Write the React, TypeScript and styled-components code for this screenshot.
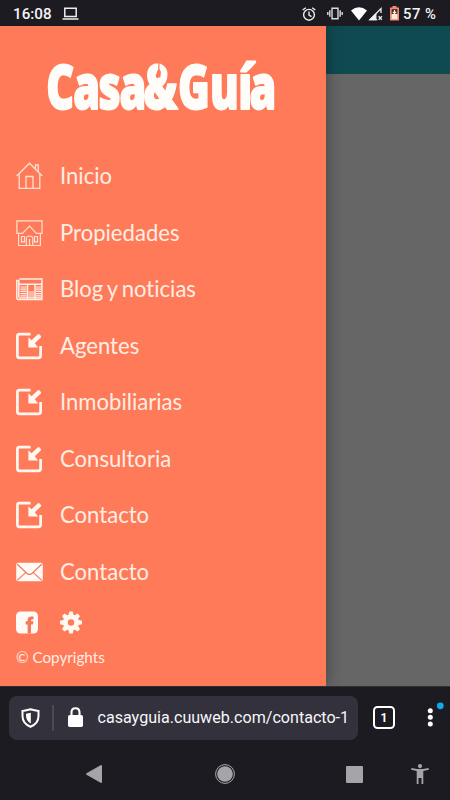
import React from "react";
import styled, { createGlobalStyle } from "styled-components";

const GlobalStyle = createGlobalStyle`
  * { box-sizing: border-box; }
  body { margin: 0; background: #1c1b22; }
`;

const Screen = styled.div`
  width: 450px;
  height: 800px;
  display: flex;
  flex-direction: column;
  overflow: hidden;
  background: #1c1b22;
`;

const StatusBar = styled.header`
  height: 26px;
  flex: none;
  display: flex;
  align-items: center;
  justify-content: space-between;
  padding: 1px 13px 0 13px;
  color: #f4f4f6;
  font: 500 15px/26px Roboto, sans-serif;
`;

const StatusGroup = styled.div`
  display: flex;
  align-items: center;
`;

const Clock = styled.span`
  width: 49px;
  font-size: 15.2px;
`;

const Battery = styled.span`
  width: 34px;
  margin-left: 4px;
  white-space: nowrap;
  font-size: 14.8px;
  letter-spacing: 0.5px;
`;

const Glyph = styled.svg<{ $gap?: number; $lift?: number }>`
  display: block;
  flex: none;
  overflow: visible;
  margin-left: ${(p) => p.$gap ?? 0}px;
  margin-top: ${(p) => p.$lift ?? 0}px;
`;

const Page = styled.main`
  height: 660px;
  flex: none;
  display: flex;
  background: #666;
`;

const Drawer = styled.aside`
  position: relative;
  z-index: 1;
  width: 326px;
  flex: none;
  background: #ff7a59;
  box-shadow: 1px 0 14px rgba(0, 0, 0, 0.32);
  clip-path: inset(0 -40px 0 0);
  font-family: Lato, sans-serif;
  color: #ffeee3;
`;

const Backdrop = styled.div`
  flex: 1;
`;

const AppBar = styled.div`
  height: 48px;
  background: #104a51;
`;

const Logo = styled.div`
  height: 122px;
`;

const Menu = styled.nav`
  display: flex;
  flex-direction: column;
`;

const MenuItem = styled.a`
  height: 56.5px;
  display: flex;
  align-items: center;
  padding-left: 16px;
  gap: 17px;
  font-size: 22.1px;
  line-height: 28px;
  word-spacing: -1.6px;
  font-variant-ligatures: none;
`;

const Shortcuts = styled.div`
  display: flex;
  gap: 22px;
  padding: 11px 0 0 16px;
`;

const Copyright = styled.p`
  margin: 13px 0 0 16px;
  font-size: 15.2px;
  line-height: 20px;
`;

const AddressRow = styled.div`
  height: 62px;
  flex: none;
  display: flex;
  align-items: center;
  padding-left: 9px;
  border-top: 1px solid #302f34;
`;

const AddressBar = styled.div`
  width: 349px;
  height: 44px;
  border-radius: 8px;
  background: #32313c;
  display: flex;
  align-items: center;
  padding-left: 12px;
`;

const Divider = styled.span`
  width: 1.5px;
  height: 26px;
  margin-left: 12px;
  background: #4b4a54;
`;

const Url = styled.span`
  margin-left: 15px;
  color: #f7f7fa;
  font: 400 16.1px/22px Roboto, sans-serif;
  white-space: nowrap;
`;

const TabCount = styled.div`
  width: 22px;
  height: 23px;
  margin-left: 15px;
  border: 2.3px solid #fff;
  border-radius: 4.5px;
  display: flex;
  align-items: center;
  justify-content: center;
  color: #fff;
  font: 700 12px/16px Roboto, sans-serif;
`;

const NavBar = styled.footer`
  height: 52px;
  flex: none;
  display: flex;
  align-items: center;
  padding-left: 86px;
`;

type IconKind = "home" | "house" | "news" | "enter" | "mail";

const HomeIcon = () => (
  <Glyph width="27" height="28" fill="none" stroke="#ffe0d0" strokeWidth="1.3">
    <path d="M.7 14 13.5 1.2 26.3 14M3.2 12v14.3h20.6V12M10 26V14.5h7V26M19.5 7V3h2.8v6.5" />
  </Glyph>
);

const HouseIcon = () => (
  <Glyph width="27" height="28" fill="none" stroke="#ffe0d0" strokeWidth="1.2">
    <path d="M6.5 14.3H.9V1.9H26v12.4h-5.6L13.5 7Z M2.6 14.5v12h21.8v-12" />
    <path d="M5.5 17.5h3v5.3h-3zM18.5 17.5h3v5.3h-3zM10.3 26v-6c0-4 6.5-4 6.5 0v6M13.5 20v6" />
  </Glyph>
);

const NewsIcon = () => (
  <Glyph width="27" height="28" fill="none" stroke="#fff1e9">
    <path d="M3.4 3.9h22.5v20.6H2.3C1.1 24.5.8 24 .8 23V5.5h2v17" strokeWidth="1.5" />
    <path d="M3 9.2h23M11.5 9v15M19 9v15" strokeWidth="1.5" />
    <path
      d="M4.5 12h6M4.5 14.2h6M4.5 16.4h6M4.5 18.6h6M4.5 20.8h6M20 12h5M20 14.2h5M20 16.4h5M20 18.6h5M20 20.8h5M12.5 17h6M12.5 19h6M12.5 21h6"
      strokeWidth="1.2"
    />
    <path d="M3 22.9h22" strokeWidth="1.3" />
  </Glyph>
);

const EnterIcon = () => (
  <Glyph width="27" height="28" fill="none" stroke="#fff8f1">
    <path d="M13.2 3.4V2.1H3.5Q1.4 2.1 1.4 4.2v19.6q0 2.1 2.1 2.1h19q2.1 0 2.1-2.1V14" strokeWidth="2.7" />
    <path d="m12.4 5.2 3.2 3.1 6-5.8q1-.8 2 .1l1.1 1.1q.9 1-.1 2l-5.8 5.6 3.3 4.2h-9.7Z" fill="#fff8f1" stroke="none" />
  </Glyph>
);

const MailIcon = () => (
  <Glyph width="27" height="20">
    <rect x=".2" y=".8" width="26.6" height="18.4" rx="1.8" fill="#fffaf6" />
    <path d="m1 2 9.5 9q3 2.8 6 0L26 2M1.2 18.4l8.7-8M25.8 18.4l-8.7-8" fill="none" stroke="#ef7659" strokeWidth="1.1" />
  </Glyph>
);

const icons: Record<IconKind, React.FC> = {
  home: HomeIcon,
  house: HouseIcon,
  news: NewsIcon,
  enter: EnterIcon,
  mail: MailIcon,
};

const entries: { label: string; icon: IconKind }[] = [
  { label: "Inicio", icon: "home" },
  { label: "Propiedades", icon: "house" },
  { label: "Blog y noticias", icon: "news" },
  { label: "Agentes", icon: "enter" },
  { label: "Inmobiliarias", icon: "enter" },
  { label: "Consultoria", icon: "enter" },
  { label: "Contacto", icon: "enter" },
  { label: "Contacto", icon: "mail" },
];

const Gear = () => (
  <Glyph width="22" height="23" viewBox="-11 -11.5 22 23">
    <g fill="#fff8f1">
      {[0, 45, 90, 135].map((a) => (
        <path key={a} d="M-1.7-11h3.4l1.2 5v12l-1.2 5h-3.4l-1.2-5V-6Z" transform={`rotate(${a})`} />
      ))}
      <circle r="7.9" />
    </g>
    <circle r="3.2" fill="#ff7a59" />
  </Glyph>
);

export default function App() {
  return (
    <>
      <GlobalStyle />
      <Screen>
        <StatusBar>
          <StatusGroup>
            <Clock>16:08</Clock>
            <Glyph width="17" height="13" fill="none" stroke="#eee">
              <path d="M2.8 1.2h11.4v8.2H2.8z" strokeWidth="1.5" />
              <path d="M.5 12h16" strokeWidth="1.5" />
            </Glyph>
          </StatusGroup>
          <StatusGroup>
            <Glyph width="14" height="14" fill="none" stroke="#eee" strokeWidth="1.4">
              <circle cx="7" cy="7.8" r="5.4" />
              <path d="M7 4.6v3.5l2.5 1.6M.7 3 3.8.7M10.2.7 13.3 3" />
            </Glyph>
            <Glyph $gap={11} width="16" height="13" fill="none" stroke="#ddd" strokeWidth="1.4">
              <path d="M5 1.2h6v10.6H5zM2.8 3.2v6.6M13.2 3.2v6.6M.8 5v3M15.2 5v3" />
            </Glyph>
            <Glyph $gap={8} width="16" height="14" fill="#fff">
              <path d="M0 3.6Q8-3 16 3.6L8 13.6Z" />
            </Glyph>
            <Glyph $gap={1} width="15" height="14" fill="none" stroke="#eee" strokeWidth="1.3">
              <path d="M13 6V1.6L2 12.7h7.2M10.6 9.3l3.3 3.6M13.9 9.3l-3.3 3.6" />
              <path d="m7.8 7.2-5.5 5.4h5.5Z" fill="#eee" />
            </Glyph>
            <Glyph $gap={7} width="9" height="15">
              <path d="M2.5 0h4v1.5H9v13H0v-13h2.5Z" fill="#f28b72" />
              <path d="M1.7 3.2h5.6v5H1.7z" fill="#302326" />
              <path d="M1.7 8h5.6v5.2H1.7z" fill="#ffe9dd" />
              <path d="M4.5 4v4M2.7 6.5h3.6" stroke="#ffe9dd" strokeWidth="1.4" />
            </Glyph>
            <Battery>57 %</Battery>
          </StatusGroup>
        </StatusBar>
        <Page>
          <Drawer>
            <Logo>
              <Glyph
                width="326"
                height="122"
                fontFamily="'Open Sans', sans-serif"
                fontWeight="800"
                fontSize="61.5"
                fill="#fffdfa"
                stroke="#fffdfa"
                strokeWidth="1.8"
                strokeLinejoin="round"
              >
                <text transform="scale(.7 1)" x="66 104.6 140.7 170.7 204.7 254.3 300 340.2 356.4" y="83">
                  Casa&amp;Guía
                </text>
                <path d="M158.3 35h1.2v8l1.5 3-.7 5.5h-2.8l-.7-5.5 1.5-3Z" fill="#ff7a59" stroke="none" />
              </Glyph>
            </Logo>
            <Menu>
              {entries.map(({ label, icon }, i) => {
                const Icon = icons[icon];
                return (
                  <MenuItem key={i}>
                    <Icon />
                    {label}
                  </MenuItem>
                );
              })}
            </Menu>
            <Shortcuts>
              <Glyph width="22" height="23">
                <rect y=".5" width="22" height="22" rx="4.5" fill="#fffaf6" />
                <path d="M11.6 22.5v-9H9.7v-3.2h1.9V9q0-3.6 3.7-3.6h2.2v3h-1.4q-1 0-1 .9v1h2.3l-.4 3.2H15v9Z" fill="#f6795a" />
              </Glyph>
              <Gear />
            </Shortcuts>
            <Copyright>© Copyrights</Copyright>
          </Drawer>
          <Backdrop>
            <AppBar />
          </Backdrop>
        </Page>
        <AddressRow>
          <AddressBar>
            <Glyph width="19" height="20">
              <path d="M9.5 1.2q4.3 1.3 8 1.7v5.2q0 7.5-8 10.7-8-3.2-8-10.7V2.9q4-.4 8-1.7Z" fill="none" stroke="#fff" strokeWidth="2" />
              <path d="M9.8 4.7v10.8q-4.8-2.5-4.8-8V5.7Z" fill="#fff" />
            </Glyph>
            <Divider />
            <Glyph $gap={14} $lift={-1} width="15" height="20">
              <path d="M3.5 9V5.3q0-4.1 4-4.1t4 4.1V9" fill="none" stroke="#fff" strokeWidth="2.1" />
              <rect y="8" width="15" height="12" rx="1.8" fill="#fff" />
            </Glyph>
            <Url>casayguia.cuuweb.com/contacto-1</Url>
          </AddressBar>
          <TabCount>1</TabCount>
          <Glyph $gap={32} width="20" height="44" fill="#fff">
            <circle cx="3.3" cy="14.8" r="2.5" />
            <circle cx="3.3" cy="21.3" r="2.5" />
            <circle cx="3.3" cy="27.9" r="2.5" />
            <circle cx="13.3" cy="9.8" r="3.4" fill="#12a8ed" />
          </Glyph>
        </AddressRow>
        <NavBar>
          <Glyph width="16" height="18" fill="#a5a4a8">
            <path d="M15 0q1 0 1 1v16q0 1-1 1L.5 9.8Q-.5 9 .5 8.2Z" />
          </Glyph>
          <Glyph $gap={113} width="20" height="20">
            <circle cx="10" cy="10" r="9.4" fill="none" stroke="#aaa9ac" />
            <circle cx="10" cy="10" r="7.8" fill="#a5a4a8" />
          </Glyph>
          <Glyph $gap={111} width="17" height="17" fill="#a5a4a8">
            <rect width="17" height="17" rx="1" />
          </Glyph>
          <Glyph $gap={48} width="18" height="20" fill="#a5a4a8">
            <circle cx="9" cy="2.1" r="2.1" />
            <path d="m.5 4 5.5 1h6l5.5-1 .4 1.8-5.6 1.1V20h-1.8v-6h-3v6H5.7V6.9L.1 5.8Z" />
          </Glyph>
        </NavBar>
      </Screen>
    </>
  );
}
